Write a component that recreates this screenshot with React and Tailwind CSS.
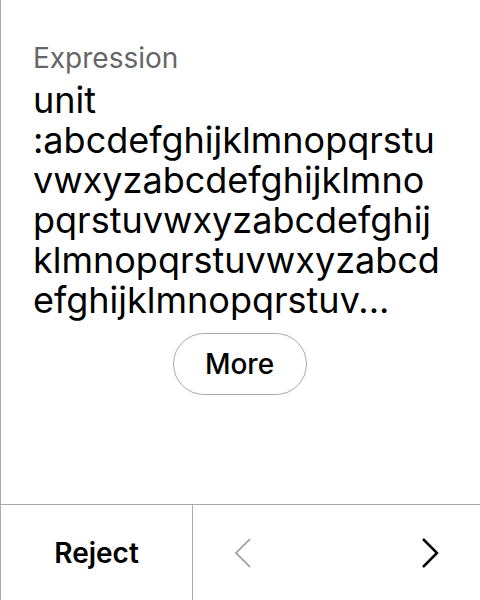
import React from "react";

const ALPHA = "abcdefghijklmnopqrstuvwxyz";

function Chevron({ dir = "right", className = "" }) {
  return (
    <svg width="20" height="32" viewBox="0 0 20 32" fill="none" className={className}>
      {dir === "left" ? (
        <path d="M17 2 L3 16 L17 30" stroke="currentColor" strokeWidth="2" />
      ) : (
        <path d="M3 2 L17 16 L3 30" stroke="currentColor" strokeWidth="2.5" />
      )}
    </svg>
  );
}

export default function App() {
  // shown value is cut short and ends with "..."
  const value = "unit :" + ALPHA.repeat(3) + "abcdefghijklmnopqrstuv...";

  return (
    <div
      className="h-[600px] w-[480px] flex flex-col border-l border-[#aaaaaa] bg-white text-black"
      style={{ fontFamily: "Inter, 'Noto Sans', sans-serif" }}
    >
      <div className="flex-1 flex flex-col pl-8 pr-[34px] pt-10">
        <p className="text-[28px] leading-[36px] text-[#666666]">Expression</p>
        <p
          className="mt-1 text-[36px] leading-[40px]"
          style={{ overflowWrap: "anywhere" }}
        >
          {value}
        </p>
        <div className="flex justify-center mt-[13px]">
          <button className="h-[62px] w-[134px] rounded-full border border-[#aaaaaa] text-[28px] font-medium">
            More
          </button>
        </div>
      </div>
      <div className="h-[96px] flex border-t border-[#aaaaaa]">
        <button className="w-[192px] border-r border-[#aaaaaa] text-[28px] font-semibold">
          Reject
        </button>
        <div className="flex-1 flex items-center justify-between pl-10 pr-10">
          <Chevron dir="left" className="text-[#aaaaaa]" />
          <Chevron dir="right" className="text-black" />
        </div>
      </div>
    </div>
  );
}
